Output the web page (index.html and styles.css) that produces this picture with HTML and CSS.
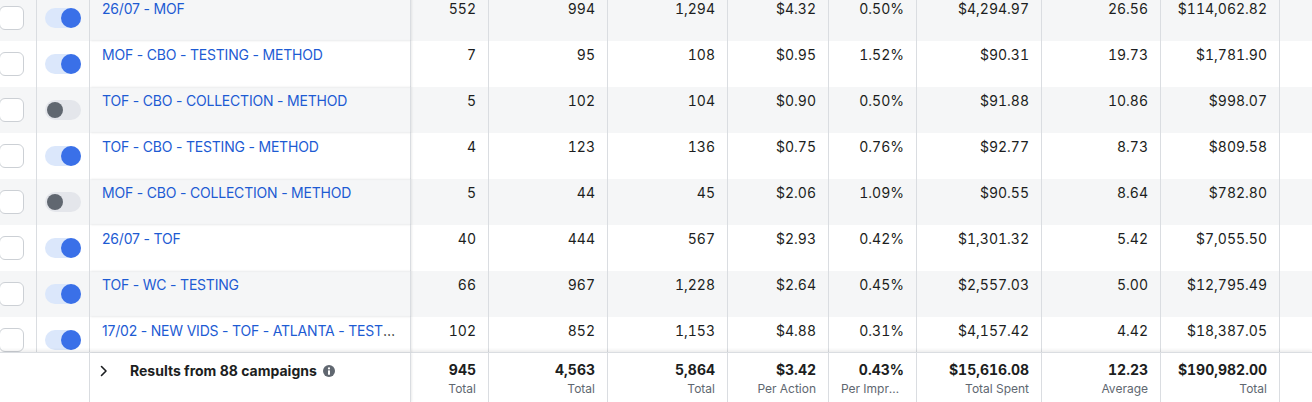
FILE: index.html
```html
<!DOCTYPE html>
<html lang="en">
<head>
<meta charset="utf-8">
<title>Campaigns</title>
<link rel="stylesheet" href="styles.css">
</head>
<body>
<div class="table">
  <div class="viewport">
    <div class="rows">
      <div class="row alt">
        <div class="cell c-check"><span class="checkbox"></span></div>
        <div class="cell c-toggle"><span class="toggle on"></span></div>
        <div class="cell c-name"><a class="name" href="#">26/07 - MOF</a></div>
        <div class="cell num">552</div><div class="cell num">994</div><div class="cell num">1,294</div><div class="cell num">$4.32</div><div class="cell num">0.50%</div><div class="cell num">$4,294.97</div><div class="cell num">26.56</div><div class="cell num">$114,062.82</div><div class="cell c-end"></div>
      </div>
      <div class="row">
        <div class="cell c-check"><span class="checkbox"></span></div>
        <div class="cell c-toggle"><span class="toggle on"></span></div>
        <div class="cell c-name"><a class="name" href="#">MOF - CBO - TESTING - METHOD</a></div>
        <div class="cell num">7</div><div class="cell num">95</div><div class="cell num">108</div><div class="cell num">$0.95</div><div class="cell num">1.52%</div><div class="cell num">$90.31</div><div class="cell num">19.73</div><div class="cell num">$1,781.90</div><div class="cell c-end"></div>
      </div>
      <div class="row alt">
        <div class="cell c-check"><span class="checkbox"></span></div>
        <div class="cell c-toggle"><span class="toggle"></span></div>
        <div class="cell c-name"><a class="name" href="#">TOF - CBO - COLLECTION - METHOD</a></div>
        <div class="cell num">5</div><div class="cell num">102</div><div class="cell num">104</div><div class="cell num">$0.90</div><div class="cell num">0.50%</div><div class="cell num">$91.88</div><div class="cell num">10.86</div><div class="cell num">$998.07</div><div class="cell c-end"></div>
      </div>
      <div class="row">
        <div class="cell c-check"><span class="checkbox"></span></div>
        <div class="cell c-toggle"><span class="toggle on"></span></div>
        <div class="cell c-name"><a class="name" href="#">TOF - CBO - TESTING - METHOD</a></div>
        <div class="cell num">4</div><div class="cell num">123</div><div class="cell num">136</div><div class="cell num">$0.75</div><div class="cell num">0.76%</div><div class="cell num">$92.77</div><div class="cell num">8.73</div><div class="cell num">$809.58</div><div class="cell c-end"></div>
      </div>
      <div class="row alt">
        <div class="cell c-check"><span class="checkbox"></span></div>
        <div class="cell c-toggle"><span class="toggle"></span></div>
        <div class="cell c-name"><a class="name" href="#">MOF - CBO - COLLECTION - METHOD</a></div>
        <div class="cell num">5</div><div class="cell num">44</div><div class="cell num">45</div><div class="cell num">$2.06</div><div class="cell num">1.09%</div><div class="cell num">$90.55</div><div class="cell num">8.64</div><div class="cell num">$782.80</div><div class="cell c-end"></div>
      </div>
      <div class="row">
        <div class="cell c-check"><span class="checkbox"></span></div>
        <div class="cell c-toggle"><span class="toggle on"></span></div>
        <div class="cell c-name"><a class="name" href="#">26/07 - TOF</a></div>
        <div class="cell num">40</div><div class="cell num">444</div><div class="cell num">567</div><div class="cell num">$2.93</div><div class="cell num">0.42%</div><div class="cell num">$1,301.32</div><div class="cell num">5.42</div><div class="cell num">$7,055.50</div><div class="cell c-end"></div>
      </div>
      <div class="row alt">
        <div class="cell c-check"><span class="checkbox"></span></div>
        <div class="cell c-toggle"><span class="toggle on"></span></div>
        <div class="cell c-name"><a class="name" href="#">TOF - WC - TESTING</a></div>
        <div class="cell num">66</div><div class="cell num">967</div><div class="cell num">1,228</div><div class="cell num">$2.64</div><div class="cell num">0.45%</div><div class="cell num">$2,557.03</div><div class="cell num">5.00</div><div class="cell num">$12,795.49</div><div class="cell c-end"></div>
      </div>
      <div class="row">
        <div class="cell c-check"><span class="checkbox"></span></div>
        <div class="cell c-toggle"><span class="toggle on"></span></div>
        <div class="cell c-name"><a class="name" href="#">17/02 - NEW VIDS - TOF - ATLANTA - TESTING</a></div>
        <div class="cell num">102</div><div class="cell num">852</div><div class="cell num">1,153</div><div class="cell num">$4.88</div><div class="cell num">0.31%</div><div class="cell num">$4,157.42</div><div class="cell num">4.42</div><div class="cell num">$18,387.05</div><div class="cell c-end"></div>
      </div>
    </div>
  </div>
  <div class="footer">
    <div class="fcell f-lead"></div>
    <div class="fcell f-name">
      <svg class="chevron" width="8" height="12" viewBox="0 0 8 12"><path d="M1.5 1.5 L6 6 L1.5 10.5" fill="none" stroke="#1c1e21" stroke-width="1.6" stroke-linecap="round" stroke-linejoin="round"/></svg>
      <span class="f-title">Results from 88 campaigns</span>
      <svg class="info" width="12" height="12" viewBox="0 0 12 12"><circle cx="6" cy="6" r="6" fill="#606770"/><circle cx="6" cy="3.4" r="1.1" fill="#fff"/><rect x="5" y="5.2" width="2" height="4.6" rx="0.6" fill="#fff"/></svg>
    </div>
    <div class="fcell fnum"><b>945</b><span>Total</span></div>
    <div class="fcell fnum"><b>4,563</b><span>Total</span></div>
    <div class="fcell fnum"><b>5,864</b><span>Total</span></div>
    <div class="fcell fnum"><b>$3.42</b><span>Per Action</span></div>
    <div class="fcell fnum"><b>0.43%</b><span class="trunc">Per Impressions</span></div>
    <div class="fcell fnum"><b>$15,616.08</b><span>Total Spent</span></div>
    <div class="fcell fnum"><b>12.23</b><span>Average</span></div>
    <div class="fcell fnum"><b>$190,982.00</b><span>Total</span></div>
    <div class="fcell f-end"></div>
  </div>
</div>
</body>
</html>
```

FILE: styles.css
```css
* { box-sizing: border-box; }
html, body { margin: 0; padding: 0; background: #fff; }
body {
  font-family: Inter, "Noto Sans", "Liberation Sans", sans-serif;
  font-size: 14px;
  color: #1c1e21;
  overflow: hidden;
}
.table { width: 1312px; }
.viewport { height: 352px; overflow: hidden; }
.rows { margin-top: -5px; }
.row {
  display: grid;
  grid-template-columns: 37px 53px 321px 78px 119px 120px 101px 88px 125px 119px 119px 1fr;
  height: 46px;
  background: #fff;
}
.row.alt { background: #f5f6f7; }
.cell {
  border-right: 1px solid #dadde1;
  padding: 5px 12px 0 12px;
  line-height: 18px;
  white-space: nowrap;
  overflow: hidden;
}
.c-end { border-right: 0; }
.num { text-align: right; font-variant-numeric: tabular-nums; }
.c-check, .c-toggle { padding: 0; display: flex; align-items: center; }
.checkbox {
  display: block;
  width: 25px;
  height: 24px;
  margin-left: -1px;
  border: 1px solid #ccd0d5;
  border-radius: 6px;
  background: #fff;
}
.c-toggle { padding-left: 8px; }
.toggle {
  position: relative;
  display: block;
  width: 36px;
  height: 20px;
  border-radius: 10px;
  background: #e4e6eb;
}
.toggle::after {
  content: "";
  position: absolute;
  left: 2px; top: 2px;
  width: 16px; height: 16px;
  border-radius: 50%;
  background: #606770;
}
.toggle.on { background: #dbe7fb; }
.toggle.on::after {
  left: auto; right: 0; top: 0;
  width: 20px; height: 20px;
  background: #3a70e8;
}
.c-name {
  padding-left: 12px;
  padding-right: 12px;
  text-overflow: ellipsis;
  box-shadow: 1px 0 2px rgba(0,0,0,0.08);
  position: relative;
  z-index: 1;
  letter-spacing: -0.2px;
}
.name { color: #1d5bd3; text-decoration: none; }

.footer {
  display: grid;
  grid-template-columns: 90px 321px 78px 119px 120px 101px 88px 125px 119px 119px 1fr;
  height: 50px;
  border-top: 1px solid #dadde1;
  box-shadow: 0 -2px 3px rgba(0,0,0,0.07);
  position: relative;
  background: #fff;
}
.fcell { border-right: 1px solid #dadde1; }
.f-end { border-right: 0; }
.f-name {
  display: flex;
  align-items: flex-start;
  padding: 9px 0 0 10px;
  box-shadow: 1px 0 2px rgba(0,0,0,0.08);
}
.chevron { margin-top: 3px; }
.f-title { font-weight: 700; margin-left: 22px; line-height: 18px; }
.info { margin-left: 6px; margin-top: 3px; }
.fnum {
  display: flex;
  flex-direction: column;
  align-items: flex-end;
  padding: 8px 12px 0 12px;
  overflow: hidden;
  font-variant-numeric: tabular-nums;
}
.fnum b { font-weight: 700; line-height: 18px; }
.fnum span {
  color: #606770;
  font-size: 12px;
  line-height: 16px;
  margin-top: 2px;
  white-space: nowrap;
}
.fnum span.trunc {
  align-self: stretch;
  overflow: hidden;
  text-overflow: ellipsis;
}
```
